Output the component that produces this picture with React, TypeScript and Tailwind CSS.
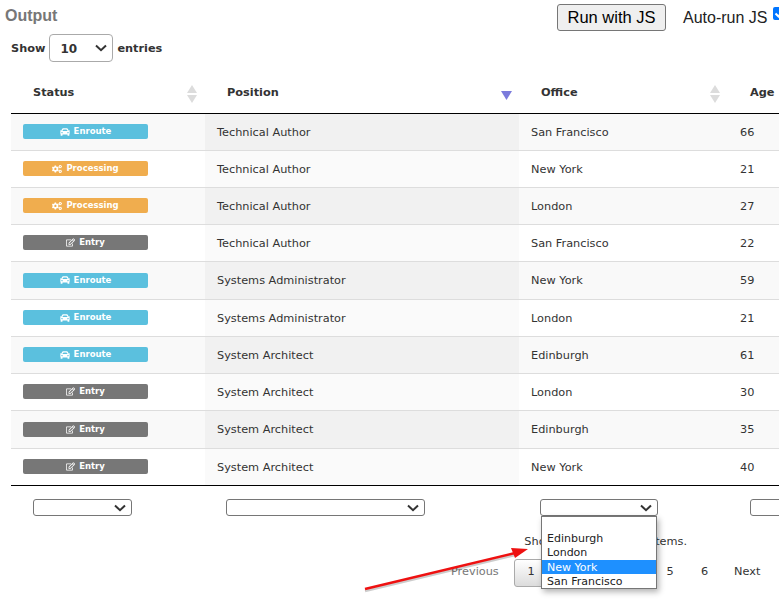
import { FaCar, FaCogs, FaRegEdit } from 'react-icons/fa';

type Status = 'Enroute' | 'Processing' | 'Entry';

const rows: Array<{ status: Status; position: string; office: string; age: number; height: string }> = [
    { status: 'Enroute', position: 'Technical Author', office: 'San Francisco', age: 66, height: 'h-[37px]' },
    { status: 'Processing', position: 'Technical Author', office: 'New York', age: 21, height: 'h-[37px]' },
    { status: 'Processing', position: 'Technical Author', office: 'London', age: 27, height: 'h-[37px]' },
    { status: 'Entry', position: 'Technical Author', office: 'San Francisco', age: 22, height: 'h-[37px]' },
    { status: 'Enroute', position: 'Systems Administrator', office: 'New York', age: 59, height: 'h-[38px]' },
    { status: 'Enroute', position: 'Systems Administrator', office: 'London', age: 21, height: 'h-[37px]' },
    { status: 'Enroute', position: 'System Architect', office: 'Edinburgh', age: 61, height: 'h-[37px]' },
    { status: 'Entry', position: 'System Architect', office: 'London', age: 30, height: 'h-[37px]' },
    { status: 'Entry', position: 'System Architect', office: 'Edinburgh', age: 35, height: 'h-[38px]' },
    { status: 'Entry', position: 'System Architect', office: 'New York', age: 40, height: 'h-[37px]' },
];

function StatusBadge({ status }: { status: Status }) {
    if (status === 'Enroute') {
        return (
            <div className="flex h-[15px] w-[125px] items-center justify-center gap-[4px] rounded-[2px] bg-[#5bc0de] text-[8.5px] font-bold text-white">
                <FaCar className="h-[10px] w-[10px]" />
                Enroute
            </div>
        );
    }
    if (status === 'Processing') {
        return (
            <div className="flex h-[15px] w-[125px] items-center justify-center gap-[4px] rounded-[2px] bg-[#f0ad4e] text-[8.5px] font-bold text-white">
                <FaCogs className="h-[10px] w-[10px]" />
                Processing
            </div>
        );
    }
    return (
        <div className="flex h-[15px] w-[125px] items-center justify-center gap-[4px] rounded-[2px] bg-[#777777] text-[8.5px] font-bold text-white">
            <FaRegEdit className="h-[9px] w-[9px]" />
            Entry
        </div>
    );
}

function SortIcon() {
    return (
        <svg viewBox="0 0 10 18" className="h-[18px] w-[10px]">
            <path d="M5 0 L10 8 L0 8 Z" fill="#dcdcdc" />
            <path d="M0 10 L10 10 L5 18 Z" fill="#dcdcdc" />
        </svg>
    );
}

function Chevron() {
    return (
        <svg viewBox="0 0 12 8" fill="none" className="pointer-events-none absolute right-[6px] top-1/2 h-[8px] w-[12px] -translate-y-1/2">
            <path d="M1 1.5 L6 6.2 L11 1.5" stroke="#333333" strokeWidth="2" />
        </svg>
    );
}

function FilterSelect({ width }: { width: string }) {
    return (
        <div className={`relative ${width} h-[17px]`}>
            <select className="block h-full w-full appearance-none rounded-[3px] border border-[#767676] bg-white text-[12px]">
                <option></option>
            </select>
            <Chevron />
        </div>
    );
}

export default function App() {
    return (
        <div className="relative h-[608px] w-[779px] overflow-hidden bg-white font-['DejaVu_Sans',sans-serif] text-[11.3px] text-[#333333]">
            {/* Top bar */}
            <div className="flex h-[32px] items-start pt-[4px] font-['Liberation_Sans',sans-serif] text-[16px]">
                <div className="ml-[5px] w-[54px] shrink-0 font-bold text-[#777777]">Output</div>
                <button className="ml-[498px] h-[27px] w-[109px] shrink-0 rounded-[3px] border border-[#767676] bg-[#efefef] text-[16.5px] text-black">
                    Run with JS
                </button>
                <div className="ml-[17px] mt-[2px] shrink-0 whitespace-nowrap text-[#222222]">Auto-run JS</div>
                <div className="ml-[6px] mt-[3px] flex h-[13px] w-[13px] shrink-0 items-center justify-center rounded-[2px] bg-[#0075ff]">
                    <svg viewBox="0 0 13 13" fill="none" className="h-[13px] w-[13px]">
                        <path d="M2.5 6.5 L5.5 9.5 L10.5 3.5" stroke="#ffffff" strokeWidth="2" />
                    </svg>
                </div>
            </div>

            {/* Length selector */}
            <div className="ml-[11px] mt-[2px] flex h-[28px] items-center font-bold">
                <span className="pt-[3px]">Show</span>
                <div className="relative ml-[4px] mr-[4px] h-[28px] w-[64px]">
                    <select
                        defaultValue="10"
                        className="block h-full w-full appearance-none rounded-[4px] border border-[#aaaaaa] bg-white pl-[10px] pt-[1px] text-[12px] font-bold text-[#333333]"
                    >
                        <option value="10">10</option>
                    </select>
                    <Chevron />
                </div>
                <span className="pt-[3px]">entries</span>
            </div>

            {/* Table */}
            <div className="ml-[11px] mt-[11px] w-[900px]">
                <table className="w-full table-fixed border-collapse">
                    <colgroup>
                        <col className="w-[194px]" />
                        <col className="w-[314px]" />
                        <col className="w-[209px]" />
                        <col />
                    </colgroup>
                    <thead>
                        <tr className="h-[40px] border-b border-black text-left font-bold">
                            <th className="pl-[22px] pt-[2px]">
                                <div className="flex items-center justify-between pr-[8px]">
                                    Status
                                    <SortIcon />
                                </div>
                            </th>
                            <th className="pl-[22px] pt-[2px]">
                                <div className="relative flex items-center">
                                    Position
                                    <svg viewBox="0 0 11 9" className="absolute left-[274px] top-[6px] h-[9px] w-[11px]">
                                        <path d="M0 0 L11 0 L5.5 9 Z" fill="#7b7bdc" />
                                    </svg>
                                </div>
                            </th>
                            <th className="pl-[22px] pt-[2px]">
                                <div className="flex items-center justify-between pr-[8px]">
                                    Office
                                    <SortIcon />
                                </div>
                            </th>
                            <th className="pl-[22px] pt-[2px]">Age</th>
                        </tr>
                    </thead>
                    <tbody>
                        {rows.map((row, index) => (
                            <tr
                                key={index}
                                className={`${row.height} border-b ${index === rows.length - 1 ? 'border-black' : 'border-[#dddddd]'} ${index % 2 === 0 ? 'bg-[#f9f9f9]' : 'bg-white'}`}
                            >
                                <td className="pl-[12px]">
                                    <StatusBadge status={row.status} />
                                </td>
                                <td className={`pl-[12px] pt-[3px] ${index % 2 === 0 ? 'bg-[#f1f1f1]' : 'bg-[#fafafa]'}`}>{row.position}</td>
                                <td className="pl-[12px] pt-[3px]">{row.office}</td>
                                <td className="pl-[12px] pt-[3px]">{row.age}</td>
                            </tr>
                        ))}
                    </tbody>
                    <tfoot>
                        <tr className="h-[43px]">
                            <th className="pl-[22px] pt-[2px] text-left font-normal">
                                <FilterSelect width="w-[99px]" />
                            </th>
                            <th className="pl-[21px] pt-[2px] text-left font-normal">
                                <FilterSelect width="w-[199px]" />
                            </th>
                            <th className="pl-[21px] pt-[2px] text-left font-normal">
                                <FilterSelect width="w-[118px]" />
                            </th>
                            <th className="pl-[22px] pt-[2px] text-left font-normal">
                                <FilterSelect width="w-[99px]" />
                            </th>
                        </tr>
                    </tfoot>
                </table>
            </div>

            {/* Info and pagination */}
            <div className="mr-[92px] mt-[6px] text-right">Showing 1 to 10 of 57 items.</div>
            <div className="mt-[8px] flex h-[28px] items-center pl-[439px]">
                <div className="w-[75px] pl-[12px] text-[#777777]">Previous</div>
                <div className="flex h-[28px] w-[34px] items-center justify-center rounded-[3px] border border-[#aaaaaa] bg-gradient-to-b from-white to-[#dcdcdc]">1</div>
                <div className="w-[35px] text-center">2</div>
                <div className="w-[35px] text-center">3</div>
                <div className="w-[35px] text-center">4</div>
                <div className="w-[34px] text-center">5</div>
                <div className="w-[35px] text-center">6</div>
                <div className="ml-[12px]">Next</div>
            </div>

            {/* Open dropdown of the office filter */}
            <div className="absolute left-[541px] top-[516px] w-[116px] border border-[#767676] bg-white pt-[14px] text-[11px] leading-[15px] text-[#222222] shadow-[2px_3px_6px_rgba(0,0,0,0.3)]">
                <div className="h-[14px] pl-[5px]">Edinburgh</div>
                <div className="h-[14px] pl-[5px]">London</div>
                <div className="mt-[1px] h-[14px] bg-[#1e90ff] pl-[5px] text-white">New York</div>
                <div className="h-[14px] pl-[5px]">San Francisco</div>
            </div>

            {/* Annotation arrow */}
            <svg viewBox="0 0 779 608" className="pointer-events-none absolute left-0 top-0 h-[608px] w-[779px]">
                <path d="M365 591 L515 555" stroke="#000000" strokeOpacity="0.2" strokeWidth="2.5" />
                <path d="M365 589 L515 553" stroke="#ee1111" strokeWidth="2.5" />
                <path d="M528 549 L511 548 L515 558 Z" fill="#ee1111" />
            </svg>
        </div>
    );
}
